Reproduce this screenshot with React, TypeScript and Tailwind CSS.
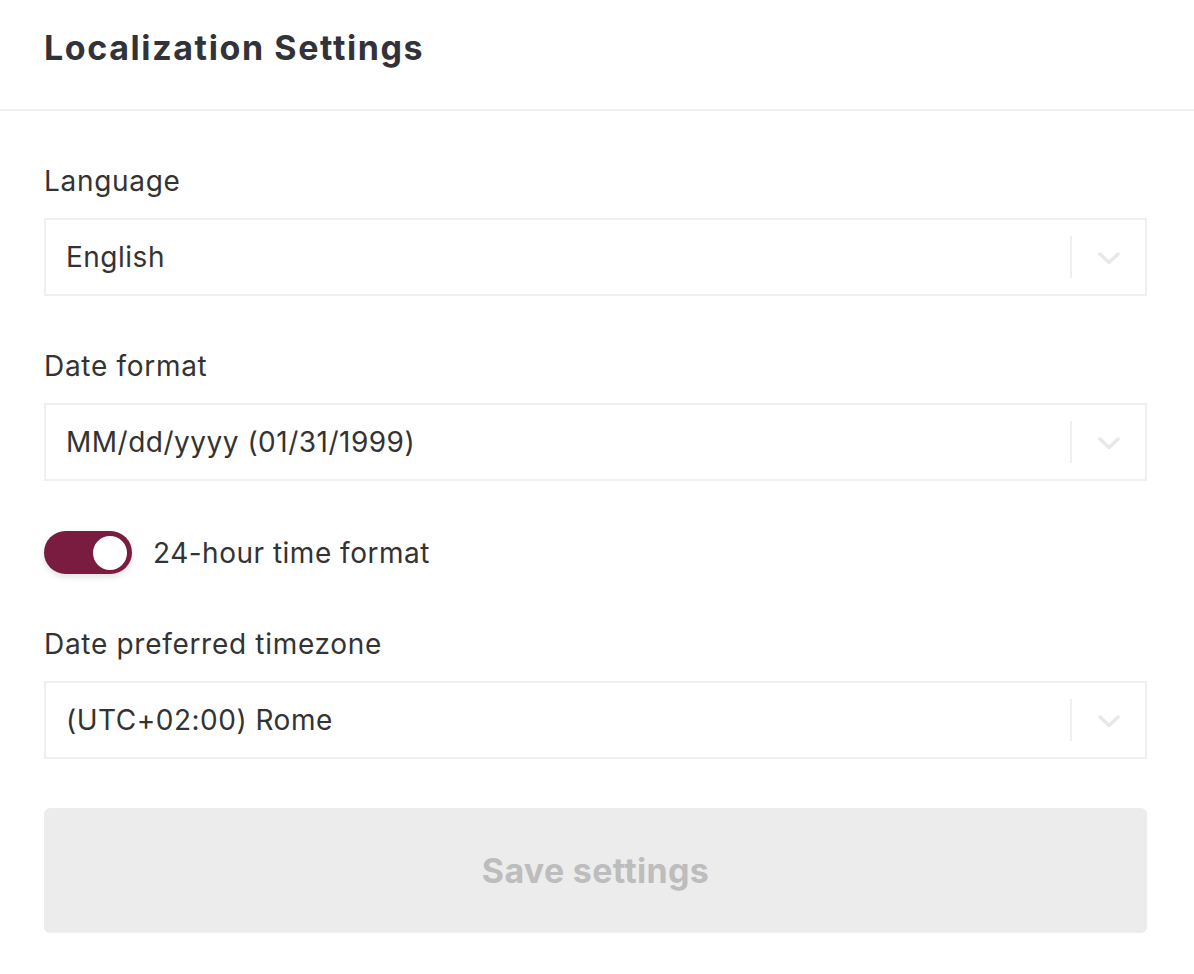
function Chevron() {
  return (
    <svg width="24" height="14" viewBox="0 0 24 14" fill="none">
      <path d="M3 3l9 8.5 9-8.5" stroke="#e8e8e8" strokeWidth="3.5" strokeLinecap="round" strokeLinejoin="round" />
    </svg>
  );
}

function SelectBox({ value }: { value: string }) {
  return (
    <div className="h-[78px] border-2 border-[#efefef] flex items-center pl-[20px]">
      <div className="flex-1 text-[28px] tracking-[0.5px] text-[#333333]">{value}</div>
      <div className="w-[2px] h-[42px] bg-[#efefef]" />
      <div className="w-[73px] flex items-center justify-center pt-[2px]">
        <Chevron />
      </div>
    </div>
  );
}

function Field({ label, value }: { label: string; value: string }) {
  return (
    <div className="flex flex-col gap-[19px]">
      <div className="text-[28px] leading-[36px] tracking-[0.7px] text-[#333333]">{label}</div>
      <SelectBox value={value} />
    </div>
  );
}

export default function App() {
  return (
    <div className="min-h-screen bg-white font-['Inter',sans-serif]">
      <div className="h-[111px] border-b-2 border-[#f0f0f0] flex items-center px-[44px]">
        <h1 className="text-[34px] font-bold tracking-[1.6px] text-[#323338] -mt-[14px]">Localization Settings</h1>
      </div>

      <div className="pl-[44px] pr-[47px] pt-[52px] flex flex-col">
        <Field label="Language" value="English" />

        <div className="mt-[52px]">
          <Field label="Date format" value="MM/dd/yyyy (01/31/1999)" />
        </div>

        <div className="mt-[50px] flex items-center gap-[21px]">
          <div className="w-[88px] h-[43px] rounded-full bg-[#7a1c40] flex items-center justify-end pr-[5px] shadow-[0_3px_6px_rgba(0,0,0,0.12)]">
            <div className="w-[34px] h-[34px] rounded-full bg-white" />
          </div>
          <div className="text-[28px] tracking-[0.5px] text-[#333333]">24-hour time format</div>
        </div>

        <div className="mt-[52px]">
          <Field label="Date preferred timezone" value="(UTC+02:00) Rome" />
        </div>

        <button className="mt-[49px] h-[125px] rounded-[6px] bg-[#ececec] text-[34px] font-bold tracking-[0.3px] text-[#bdbdbd]">
          Save settings
        </button>
      </div>
    </div>
  );
}
